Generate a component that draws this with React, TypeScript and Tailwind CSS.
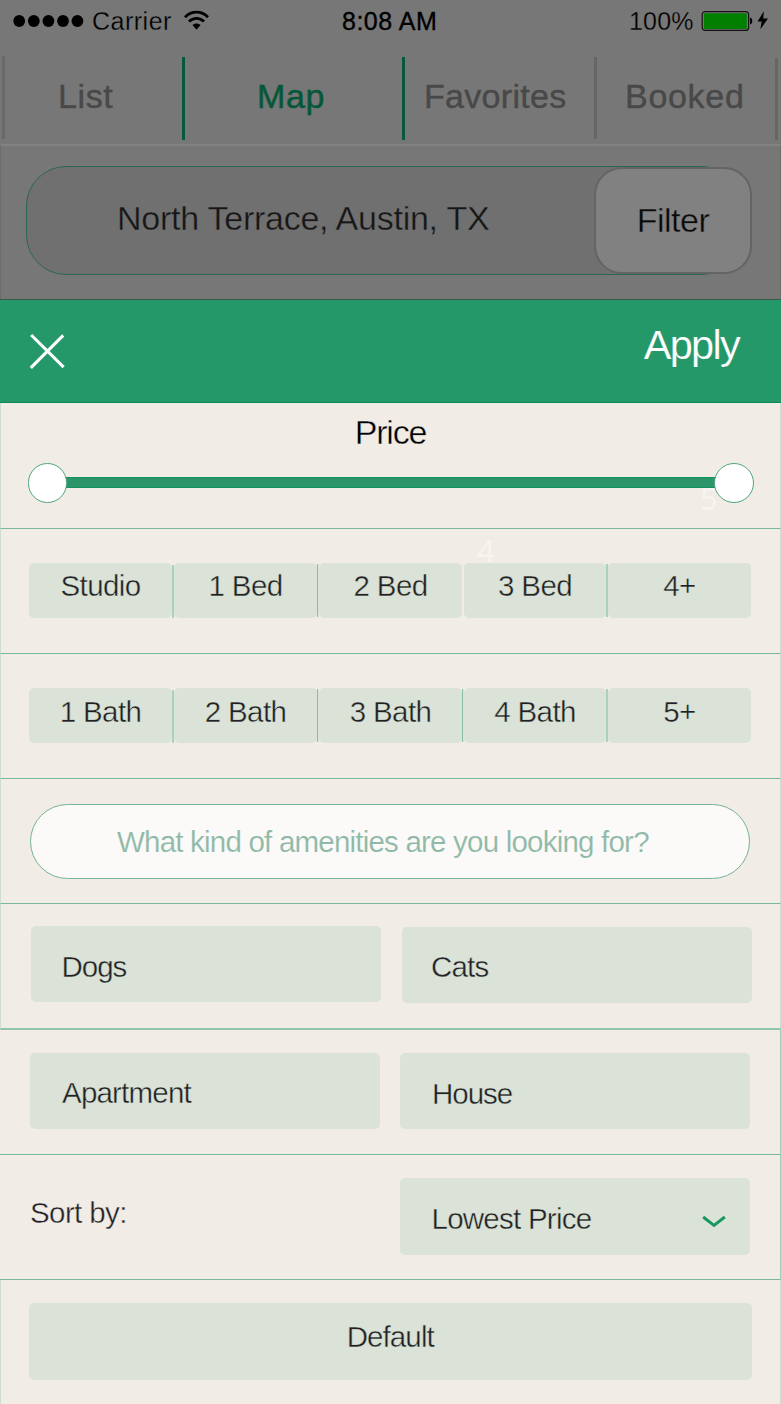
import { Fragment } from "react";
import type { ReactNode } from "react";

const cellText =
  "whitespace-nowrap text-[29.5px] leading-[30px] text-[#231f25] [-webkit-text-stroke:0.4px_#dbe3d8]";

function StatusBar() {
  return (
    <div className="flex h-14 items-start text-[25px] leading-[25px] text-black">
      <svg className="ml-[13px] mt-[14px] h-[14px] w-[71px]" viewBox="0 0 71 14">
        {[6.2, 20.8, 35.4, 50, 64.4].map((cx) => (
          <circle key={cx} cx={cx} cy={7} r={5.9} fill="#000" />
        ))}
      </svg>
      <span className="ml-2 mt-[9px] w-[91px] tracking-[0.5px] [-webkit-text-stroke:0.3px_#777777]">Carrier</span>
      <svg className="mt-[10px] h-[21px] w-[27px]" viewBox="0 0 27 21">
        <path d="M2 7.2C8.6 .5 18.4 .5 25 7.2" fill="none" stroke="#000" strokeWidth="2.8" />
        <path d="M6 11.6C10.3 7.4 16.7 7.4 21 11.6" fill="none" stroke="#000" strokeWidth="2.8" />
        <path d="M9.4 15.1C11.7 13 15.3 13 17.6 15.1L13.5 19.8Z" fill="#000" />
      </svg>
      <span className="ml-[132px] mt-[9px] w-[110px] whitespace-nowrap tracking-[0.5px] [-webkit-text-stroke:0.35px_#000]">
        8:08 AM
      </span>
      <span className="ml-[177px] mt-[9px] w-[72px] tracking-[0.2px] [-webkit-text-stroke:0.3px_#777777]">100%</span>
      <svg className="mt-[10px] h-[22px] w-[69px]" viewBox="0 0 69 22">
        <rect x="1.2" y="1.6" width="46.4" height="18.8" rx="3" fill="#777" stroke="#151015" strokeWidth="1.2" />
        <rect x="3" y="3.2" width="42.8" height="15.8" rx="1" fill="#007f00" />
        <path d="M49 7.6C52 8.2 52 14 49 14.6Z" fill="#000" />
        <path d="M62.8 1.2L56.6 11.6H60.6L59.4 19.2L67 8.6H62.3Z" fill="#000" />
      </svg>
    </div>
  );
}

function Tabs() {
  const tab = "pt-[23px] whitespace-nowrap text-[34px] leading-[34px]";
  return (
    <div className="flex h-[88px] items-start text-[#484848]">
      <div className="ml-0.5 h-[83px] w-[3px] bg-[#696969]" />
      <div className={`${tab} w-[177px] pl-[53px] tracking-[0.6px] [-webkit-text-stroke:0.4px_#484848]`}>List</div>
      <div className="mt-px h-[83px] w-[3px] bg-[#08583a]" />
      <div
        className={`${tab} w-[217px] pl-[72px] tracking-[0.6px] text-[#06573a] [-webkit-text-stroke:0.5px_#06573a]`}
      >
        Map
      </div>
      <div className="mt-px h-[83px] w-[3px] bg-[#08583a]" />
      <div className={`${tab} w-[189px] pl-[19px] tracking-[0.3px] [-webkit-text-stroke:0.4px_#484848]`}>
        Favorites
      </div>
      <div className="mt-px h-[82px] w-[3px] bg-[#666666]" />
      <div className={`${tab} w-[178px] pl-[28px] tracking-[0.7px] [-webkit-text-stroke:0.4px_#484848]`}>Booked</div>
      <div className="mt-0.5 h-[82px] w-[3px] bg-[#666666]" />
    </div>
  );
}

function SearchArea() {
  return (
    <div className="h-[155px] border-x border-t-2 border-x-[#6c6c6c] border-t-[#828282] bg-[#777777] pl-[25px] pt-5">
      <div className="flex h-[109px] w-[716px] rounded-[40px] border border-[#2b6850] bg-[#707070]">
        <div className="w-[567px] shrink-0 whitespace-nowrap pl-[90px] pt-[34px] text-[34px] leading-[34px] tracking-[-0.25px] text-[#161616] [-webkit-text-stroke:0.4px_#707070]">
          North Terrace, Austin, TX
        </div>
        <button className="h-[107px] w-[158px] shrink-0 rounded-[28px] border-2 border-[#646464] bg-[#818181] pb-0.5 text-[34px] leading-[34px] tracking-[-0.5px] text-[#0a0a0a] [-webkit-text-stroke:0.4px_#818181]">
          Filter
        </button>
      </div>
    </div>
  );
}

function Row({ children, className }: { children?: ReactNode; className: string }) {
  return <div className={`flex shrink-0 items-start ${className}`}>{children}</div>;
}

const dividers = [
  "mt-[2px] h-[53px] bg-[#acd0be]",
  "mt-px h-[53px] border-r border-r-[#dbe3d8] bg-[#8abda5]",
  "mt-px h-[53px] border-r border-r-[#dbe3d8] bg-[#8abda5]",
  "mt-px h-[53px] bg-[#acd0be]",
];

function Segments({ labels, hidden, pad }: { labels: string[]; hidden: number; pad: string }) {
  return (
    <div className="flex h-[55px] w-[722px] items-start">
      {labels.map((label, i) => (
        <Fragment key={label}>
          <div
            className={`${i === 3 ? "w-[142px]" : "w-[143px]"} h-[55px] rounded-[5px] bg-[#dbe3d8] text-center ${pad} ${cellText} tracking-[-0.6px]`}
          >
            {label}
          </div>
          {i < 4 && <div className={`w-[2px] ${i === hidden ? "h-[55px]" : dividers[i]}`} />}
        </Fragment>
      ))}
    </div>
  );
}

function Cell({ label, className }: { label: string; className: string }) {
  return <div className={`rounded-[5px] bg-[#dbe3d8] ${cellText} ${className}`}>{label}</div>;
}

const side = "border-x border-x-[#cdddd0]";
const rule = "border-b border-b-[#79b899]";

export default function App() {
  return (
    <div className="flex h-[1404px] w-[781px] flex-col overflow-hidden bg-[#f1ece6] font-['Liberation_Sans',Arial,sans-serif]">
      <div className="h-[299px] shrink-0 bg-[#777777]">
        <StatusBar />
        <Tabs />
        <SearchArea />
      </div>

      <div className="flex h-[104px] shrink-0 items-start justify-between border-b border-t border-b-[#078b5a] border-t-[#39594b] bg-[#25986a]">
        <svg className="ml-[29px] mt-[33px] h-9 w-9" viewBox="0 0 36 36">
          <path d="M2.2 2L34.6 34.2M34.2 2.4L1.8 34.8" stroke="#fff" strokeWidth="3.1" />
        </svg>
        <span className="mr-[42px] mt-[24px] text-[41.5px] leading-[42px] tracking-[-1.7px] text-white [-webkit-text-stroke:0.2px_#25986a]">
          Apply
        </span>
      </div>

      <Row className={`${side} ${rule} relative h-[126px] flex-col`}>
        <div className="w-full pt-3 text-center text-[34px] leading-[34px] tracking-[-1.2px] text-black [-webkit-text-stroke:0.4px_#f1ece6]">
          Price
        </div>
        <div className="relative z-10 ml-[26.5px] mt-[14px] flex h-10 w-[726px] items-center justify-between">
          <div className="absolute inset-x-5 top-[14px] h-[11px] border-y border-[#12925f] bg-[#2c9569]" />
          <div className="relative size-[39.5px] rounded-full border border-[#4fa57f] bg-white" />
          <div className="relative size-[39.5px] rounded-full border border-[#4fa57f] bg-white" />
        </div>
        <span className="absolute left-[699px] top-[77px] font-['Noto_Sans'] text-[31px] leading-[36px] text-[#f7f4f1]">
          5
        </span>
      </Row>

      <Row className={`${side} ${rule} relative h-[125px] pl-7 pt-[34px]`}>
        <Segments labels={["Studio", "1 Bed", "2 Bed", "3 Bed", "4+"]} hidden={2} pad="pt-2" />
        <span className="absolute left-[476px] top-[3px] font-['Noto_Sans'] text-[31px] leading-[36px] text-[#f7f4f1]">
          4
        </span>
      </Row>

      <Row className={`${side} ${rule} h-[125px] pl-7 pt-[34px]`}>
        <Segments labels={["1 Bath", "2 Bath", "3 Bath", "4 Bath", "5+"]} hidden={-1} pad="pt-[9px]" />
      </Row>

      <Row className={`${side} ${rule} h-[125px] pl-[29px] pt-[25px]`}>
        <div className="h-[75px] w-[720px] whitespace-nowrap rounded-full border border-[#74b396] bg-[#fcfaf8] pl-[86px] pt-[22px] text-[29.5px] leading-[30px] tracking-[-0.79px] text-[#8fb9a7] [-webkit-text-stroke:0.15px_#fcfaf8]">
          What kind of amenities are you looking for?
        </div>
      </Row>

      <Row className={`${side} h-[126px] gap-[21px] border-b-2 border-b-[#90c6aa] pl-[30px] pt-[22px]`}>
        <Cell label="Dogs" className="h-[76px] w-[350px] pl-[30.5px] pt-[26px] tracking-[-1px]" />
        <Cell label="Cats" className="mt-px h-[76px] w-[350px] pl-[29px] pt-[25px] tracking-[-0.8px]" />
      </Row>

      <Row className={`${rule} h-[125px] gap-5 border-r border-r-[#9fcdb6] pl-[30px] pt-[23px]`}>
        <Cell label="Apartment" className="h-[76px] w-[350px] pl-8 pt-[25px] tracking-[-0.8px]" />
        <Cell label="House" className="h-[76px] w-[350px] pl-8 pt-[26px] tracking-[-1px]" />
      </Row>

      <Row className={`${rule} h-[125px] border-r border-r-[#9fcdb6] pl-[30px] pt-[23px]`}>
        <span className="w-[369.5px] pt-5 text-[29.5px] leading-[30px] tracking-[-0.6px] text-[#231f25] [-webkit-text-stroke:0.4px_#f1ece6]">
          Sort by:
        </span>
        <div className="flex h-[77px] w-[350.5px] justify-between rounded-[5px] bg-[#dbe3d8]">
          <span className={`${cellText} pl-8 pt-[26px] tracking-[-0.75px]`}>Lowest Price</span>
          <svg className="mr-6 mt-[37px] h-[13px] w-6" viewBox="0 0 24 13">
            <path d="M1.2 2L12 10.5L22.8 2" fill="none" stroke="#18965f" strokeWidth="2.9" />
          </svg>
        </div>
      </Row>

      <Row className={`${side} h-[124px] pl-7 pt-[23px]`}>
        <Cell label="Default" className="h-[77px] w-[722.5px] pt-[19px] text-center tracking-[-0.9px]" />
      </Row>
    </div>
  );
}
